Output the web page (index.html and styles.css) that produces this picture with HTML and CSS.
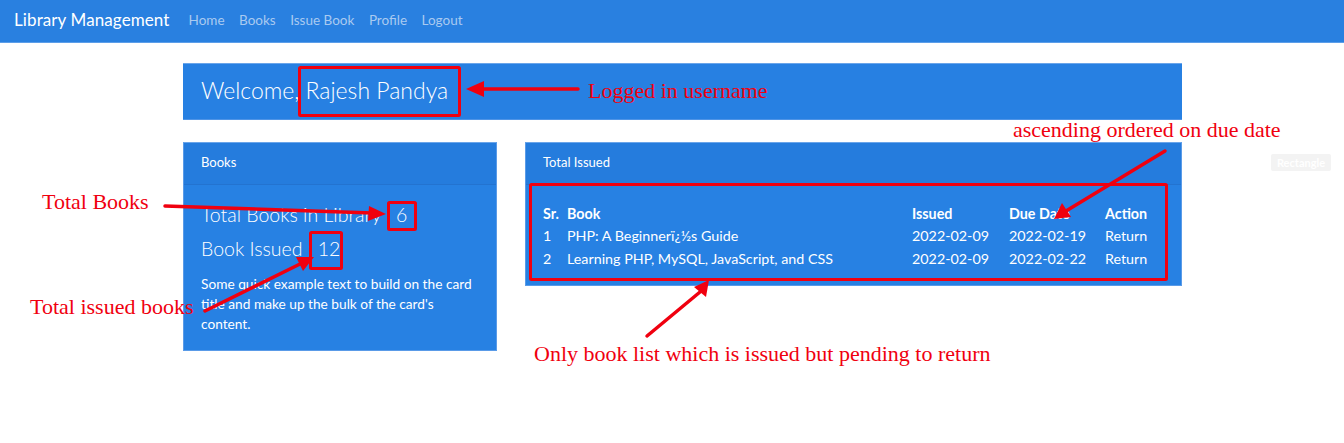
FILE: index.html
```html
<!DOCTYPE html>
<html lang="en">
<head>
<meta charset="utf-8">
<title>Library Management</title>
<link rel="stylesheet" href="styles.css">
</head>
<body>
<nav class="navbar">
  <span class="brand">Library Management</span>
  <ul class="nav-links">
    <li>Home</li>
    <li>Books</li>
    <li>Issue Book</li>
    <li>Profile</li>
    <li>Logout</li>
  </ul>
</nav>

<main class="container">
  <section class="jumbo">
    <h1 class="welcome">Welcome, Rajesh Pandya</h1>
  </section>

  <div class="row">
    <section class="card card-books">
      <header class="card-header">Books</header>
      <div class="card-body">
        <h2 class="stat">Total Books in Library : 6</h2>
        <h2 class="stat">Book Issued : 12</h2>
        <p class="card-text">Some quick example text to build on the card title and make up the bulk of the card's content.</p>
      </div>
    </section>

    <section class="card card-issued">
      <header class="card-header">Total Issued</header>
      <div class="card-body table-body">
        <table class="issued-table">
          <thead>
            <tr><th class="c-sr">Sr.</th><th class="c-book">Book</th><th class="c-date">Issued</th><th class="c-due">Due Date</th><th class="c-act">Action</th></tr>
          </thead>
          <tbody>
            <tr><td>1</td><td>PHP: A Beginnerï¿½s Guide</td><td>2022-02-09</td><td>2022-02-19</td><td>Return</td></tr>
            <tr><td>2</td><td>Learning PHP, MySQL, JavaScript, and CSS</td><td>2022-02-09</td><td>2022-02-22</td><td>Return</td></tr>
          </tbody>
        </table>
      </div>
    </section>
  </div>
</main>

<div class="badge">Rectangle</div>

<svg class="marks" width="1344" height="443" viewBox="0 0 1344 443" xmlns="http://www.w3.org/2000/svg">
  <g fill="none" stroke="#f0000f" stroke-width="3">
    <rect x="299.5" y="67.5" width="160" height="48" rx="1"/>
    <rect x="388.5" y="202.5" width="27" height="27" rx="1"/>
    <rect x="310.5" y="232.5" width="31" height="36" rx="1"/>
    <rect x="530.5" y="184.5" width="636" height="95" rx="1"/>
  </g>
  <g stroke="#f0000f" stroke-width="3.5" stroke-linecap="round">
    <line x1="578" y1="89" x2="480" y2="89"/>
    <line x1="165" y1="206" x2="372" y2="213"/>
    <line x1="205" y1="311" x2="300" y2="264"/>
    <line x1="1165" y1="151" x2="1066" y2="211"/>
    <line x1="647" y1="336" x2="700" y2="292"/>
  </g>
  <g fill="#f0000f">
    <polygon points="466,89 484,81 484,97"/>
    <polygon points="386,214 369,206 368,221"/>
    <polygon points="314,257 296,257 303,271"/>
    <polygon points="1054,219 1062,203 1071,217"/>
    <polygon points="709,280 706,297 694,287"/>
  </g>
</svg>

<div class="note note-user">Logged in username</div>
<div class="note note-total">Total Books</div>
<div class="note note-issued">Total issued books</div>
<div class="note note-asc">ascending ordered on due date</div>
<div class="note note-only">Only book list which is issued but pending to return</div>
</body>
</html>
```

FILE: styles.css
```css
* { box-sizing: border-box; }

html, body {
  margin: 0;
  padding: 0;
}

body {
  width: 1344px;
  height: 443px;
  position: relative;
  overflow: hidden;
  background: #ffffff;
  font-family: "Lato", "Open Sans", sans-serif;
  color: #ffffff;
}

.navbar {
  height: 43px;
  background: #2980e0;
  border-bottom: 1px solid #5c9ee9;
  display: flex;
  align-items: center;
  padding: 0 0 3px 14px;
}

.brand {
  font-size: 17px;
  color: #ffffff;
  margin-right: 19px;
  letter-spacing: 0.1px;
}

.nav-links {
  list-style: none;
  margin: 0;
  padding: 0;
  display: flex;
  gap: 14.5px;
  font-size: 13.5px;
  color: #a9caf0;
}

.container {
  width: 999px;
  margin: 20px 0 0 183px;
}

.jumbo {
  height: 57px;
  background: #2780e2;
  border-top: 1px solid #6aa5ea;
  border-bottom: 1px solid #4f94e6;
  display: flex;
  align-items: center;
  padding: 0 18px 3px;
}

.welcome {
  margin: 0;
  font-size: 23px;
  font-weight: 300;
  letter-spacing: 0;
}

.row {
  display: flex;
  align-items: flex-start;
  gap: 28px;
  margin-top: 22px;
}

.card {
  background: #2781e3;
  border: 1px solid #5a9be8;
  border-top-color: #6aa5ea;
}

.card-books { width: 314px; height: 209px; }
.card-issued { width: 657px; height: 144px; }

.card-header {
  height: 42px;
  background: #257cdd;
  border-bottom: 1px solid #2373d0;
  display: flex;
  align-items: center;
  padding: 0 17px 3px;
  font-size: 13px;
}

.card-body {
  padding: 16px 17px 0;
}

.stat {
  margin: 0;
  font-size: 19.5px;
  font-weight: 300;
  line-height: 28px;
}

.stat + .stat { margin-top: 6px; }

.card-text {
  margin: 11px 0 0;
  font-size: 13.7px;
  line-height: 20px;
}

.table-body {
  padding: 17px 17px 0;
}

.issued-table {
  border-collapse: collapse;
  font-size: 14.3px;
  table-layout: fixed;
  width: 621px;
}

.issued-table th,
.issued-table td {
  text-align: left;
  padding: 0;
  height: 22.5px;
  white-space: nowrap;
}

.issued-table th { font-weight: 700; }

.c-sr { width: 24px; }
.c-book { width: 345px; }
.c-date { width: 97px; }
.c-due { width: 96px; }
.c-act { width: 59px; }

.badge {
  position: absolute;
  left: 1271px;
  top: 154px;
  width: 60px;
  height: 17px;
  background: #f3f3f3;
  border-radius: 2px;
  color: #ffffff;
  font-size: 11px;
  font-weight: 700;
  display: flex;
  align-items: center;
  justify-content: center;
}

.marks {
  position: absolute;
  left: 0;
  top: 0;
}

.note {
  position: absolute;
  font-family: "Liberation Serif", "Times New Roman", serif;
  font-size: 22px;
  line-height: 24px;
  color: #f0000f;
  white-space: nowrap;
}

.note-user { left: 588px; top: 79px; }
.note-total { left: 42px; top: 190px; }
.note-issued { left: 30px; top: 295px; }
.note-asc { left: 1013px; top: 118px; }
.note-only { left: 534px; top: 342px; }
```
